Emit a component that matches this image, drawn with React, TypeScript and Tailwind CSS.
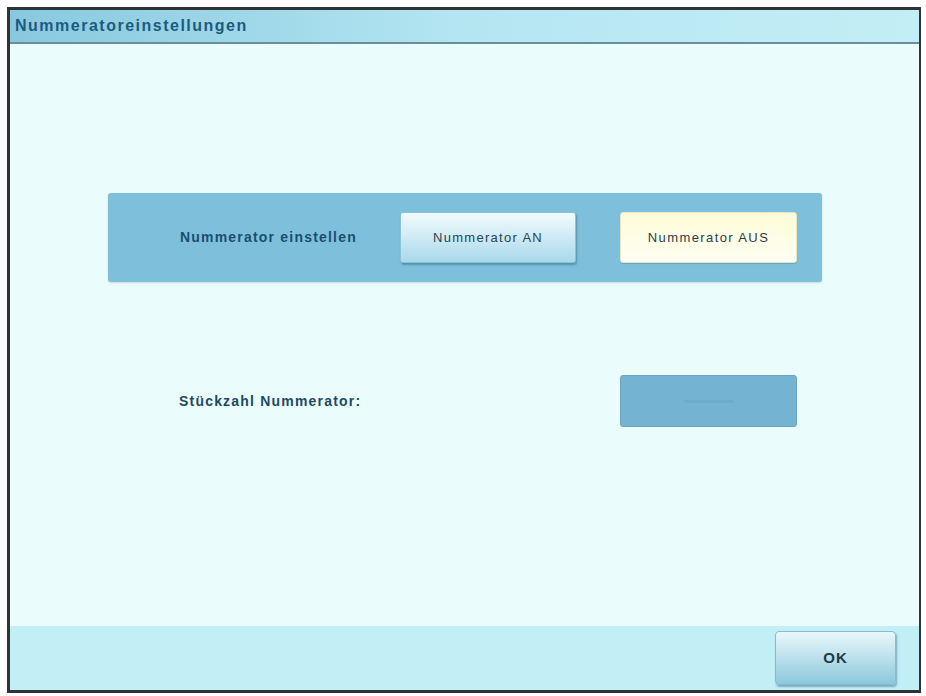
export default function App() {
  return (
    <div
      className="w-[926px] h-[696px] bg-white pt-[7px] pl-[7px]"
      style={{ fontFamily: '"Liberation Sans", Arial, sans-serif' }}
    >
      <div className="w-[914px] h-[686px] flex flex-col border-t-[3px] border-l-[3px] border-r-[2px] border-b-[3px] border-[#2e3436] bg-[#ebfcfc]">
        {/* header */}
        <div className="h-[34px] flex items-center px-[5px] bg-gradient-to-r from-[#88c8de] via-[#b4e6f2] to-[#c4eef6] border-b-[2px] border-[#6a8e9a]">
          <span className="text-[16px] font-bold text-[#1b5c7e] tracking-[1.5px]">
            Nummeratoreinstellungen
          </span>
        </div>

        {/* body */}
        <div className="flex-1 flex flex-col">
          <div className="mt-[149px] ml-[98px] w-[714px] h-[89px] rounded-[3px] bg-[#7ec0dc] flex items-center shadow-[0_1px_2px_rgba(0,0,0,0.15)]">
            <div className="w-[292px] pl-[72px] text-[14px] font-bold text-[#1a4f6e] tracking-[1.2px]">
              Nummerator einstellen
            </div>
            <button className="w-[176px] h-[51px] rounded-[3px] bg-gradient-to-b from-[#f2fbfd] to-[#a9d9eb] border border-[#8cc2d6] shadow-[1px_2px_2px_rgba(40,90,110,0.45)] text-[13px] text-[#2c4450] tracking-[1.3px]">
              Nummerator AN
            </button>
            <button className="ml-[44px] w-[177px] h-[51px] rounded-[3px] bg-gradient-to-b from-[#fdfbd6] to-[#fffff4] border border-[#e8e6c4] shadow-[0_1px_1px_rgba(0,0,0,0.15)] text-[13px] text-[#2c3e48] tracking-[1.4px]">
              Nummerator AUS
            </button>
          </div>

          <div className="mt-[93px] flex items-center">
            <div className="ml-[169px] w-[441px] text-[14px] font-bold text-[#1e4a62] tracking-[1.2px]">
              Stückzahl Nummerator:
            </div>
            <div className="w-[177px] h-[52px] rounded-[3px] bg-[#74b3d2] border border-[#6aa6c4] flex items-center justify-center">
              <span className="w-[50px] h-[3px] bg-[#6eacca]"></span>
            </div>
          </div>
        </div>

        {/* footer */}
        <div className="h-[64px] bg-[#c2eef6] flex items-center justify-end pr-[23px]">
          <button className="w-[121px] h-[54px] rounded-[4px] bg-gradient-to-b from-[#e9f8fb] to-[#8cc8dc] border border-[#86bcd0] shadow-[1px_2px_2px_rgba(40,90,110,0.45)] text-[15px] font-bold text-[#213a46] tracking-[1px]">
            OK
          </button>
        </div>
      </div>
    </div>
  );
}
